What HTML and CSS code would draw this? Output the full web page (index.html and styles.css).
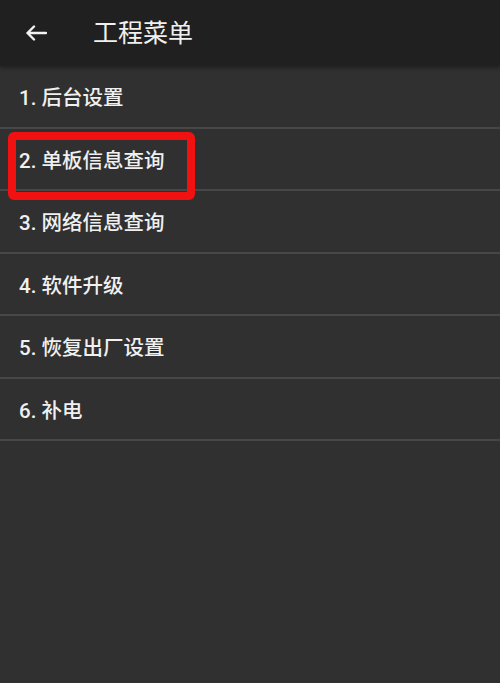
FILE: index.html
```html
<!DOCTYPE html>
<html lang="zh-CN">
<head>
    <meta charset="UTF-8">
    <meta name="viewport" content="width=device-width, initial-scale=1.0">
    <title>工程菜单</title>
    <link rel="stylesheet" href="styles.css">
</head>
<body>
    <!-- 顶部标题栏 -->
    <div class="header">
        <span class="back">
            <svg width="22" height="16" viewBox="0 0 22 16">
                <path d="M21 8H2.5M9 1.5L2.5 8L9 14.5" fill="none" stroke="#f2f2f2" stroke-width="2.4" stroke-linecap="round" stroke-linejoin="round"/>
            </svg>
        </span>
        <span class="title">工程菜单</span>
    </div>

    <!-- 菜单列表 -->
    <ul class="menu">
        <li>1. 后台设置</li>
        <li class="marked">2. 单板信息查询<span class="mark"></span></li>
        <li>3. 网络信息查询</li>
        <li>4. 软件升级</li>
        <li>5. 恢复出厂设置</li>
        <li>6. 补电</li>
    </ul>
</body>
</html>
```

FILE: styles.css
```css
*{
    margin: 0;
    padding: 0;
    box-sizing: border-box;
}
li{
    list-style: none;
}
html,body{
    height: 100%;
}
body{
    background: #303030;
    font-family: Roboto, "Noto Sans CJK SC", sans-serif;
    color: #f0f0f0;
}
.header{
    height: 66px;
    background: #202020;
    display: flex;
    align-items: center;
    box-shadow: 0 2px 4px rgba(0,0,0,0.35);
    position: relative;
}
.header .back{
    width: 93px;
    padding-left: 25px;
    display: flex;
    align-items: center;
    padding-bottom: 1px;
}
.header .title{
    font-size: 25px;
    line-height: 1;
}
.menu li{
    height: 62.5px;
    border-bottom: 2px solid #474747;
    display: flex;
    align-items: center;
    padding-left: 19px;
    font-size: 20.5px;
    font-weight: 500;
    position: relative;
}
.menu li.marked .mark{
    position: absolute;
    left: 8px;
    top: 3.5px;
    width: 187px;
    height: 68px;
    border: 8px solid #f21111;
    border-radius: 6px;
}
```
